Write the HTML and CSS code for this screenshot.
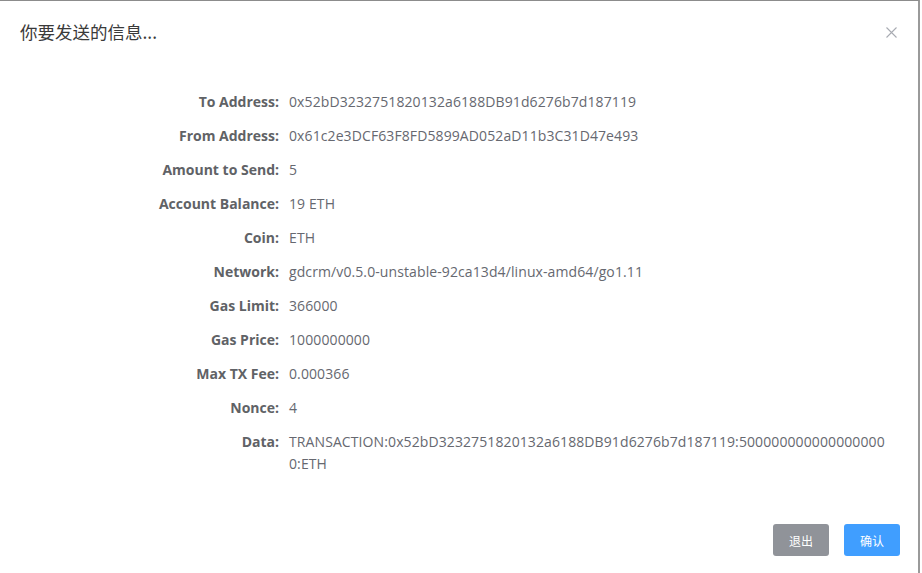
FILE: index.html
```html
<!DOCTYPE html>
<html lang="zh">
<head>
<meta charset="utf-8">
<link rel="stylesheet" href="styles.css">
</head>
<body>
<div class="dialog">
  <div class="header">
    <span class="title">你要发送的信息...</span>
    <button class="close" aria-label="close">
      <svg width="11" height="11" viewBox="0 0 11 11"><path d="M0.5 0.5 L10.5 10.5 M10.5 0.5 L0.5 10.5" stroke="#a8abb2" stroke-width="1.1" fill="none"/></svg>
    </button>
  </div>
  <div class="body">
    <div class="row"><div class="label">To Address:</div><div class="value">0x52bD3232751820132a6188DB91d6276b7d187119</div></div>
    <div class="row"><div class="label">From Address:</div><div class="value">0x61c2e3DCF63F8FD5899AD052aD11b3C31D47e493</div></div>
    <div class="row"><div class="label">Amount to Send:</div><div class="value">5</div></div>
    <div class="row"><div class="label">Account Balance:</div><div class="value">19 ETH</div></div>
    <div class="row"><div class="label">Coin:</div><div class="value">ETH</div></div>
    <div class="row"><div class="label">Network:</div><div class="value">gdcrm/v0.5.0-unstable-92ca13d4/linux-amd64/go1.11</div></div>
    <div class="row"><div class="label">Gas Limit:</div><div class="value">366000</div></div>
    <div class="row"><div class="label">Gas Price:</div><div class="value">1000000000</div></div>
    <div class="row"><div class="label">Max TX Fee:</div><div class="value">0.000366</div></div>
    <div class="row"><div class="label">Nonce:</div><div class="value">4</div></div>
    <div class="row"><div class="label">Data:</div><div class="value wrap">TRANSACTION:0x52bD3232751820132a6188DB91d6276b7d187119:5000000000000000000:ETH</div></div>
  </div>
  <div class="footer">
    <button class="btn btn-gray">退出</button>
    <button class="btn btn-blue">确认</button>
  </div>
</div>
</body>
</html>
```
FILE: styles.css
```css
html, body {
  margin: 0;
  padding: 0;
  background: #ffffff;
}
body {
  font-family: "Open Sans", "Noto Sans CJK SC", sans-serif;
  color: #606266;
}
.dialog {
  width: 918px;
  height: 572px;
  background: #ffffff;
  border-top: 1px solid #8c8c8c;
  border-right: 2px solid #9a9a9a;
  display: flex;
  flex-direction: column;
}
.header {
  height: 60px;
  padding: 2px 20px 0 20px;
  display: flex;
  align-items: center;
  justify-content: space-between;
  box-sizing: border-box;
}
.title {
  font-family: "Noto Sans CJK SC", sans-serif;
  font-size: 17.5px;
  color: #3a3a3a;
  line-height: 24px;
}
.close {
  border: 0;
  background: none;
  padding: 0;
  margin-right: 1px;
  display: flex;
}
.body {
  padding-top: 24px;
  padding-right: 31px;
}
.row {
  display: grid;
  grid-template-columns: 279px 1fr;
  column-gap: 10px;
  padding: 6px 0;
  font-size: 14px;
  line-height: 22px;
}
.label {
  text-align: right;
  font-weight: 700;
  color: #606266;
}
.value {
  color: #666870;
  letter-spacing: 0.1px;
}
.wrap {
  word-break: break-all;
}
.footer {
  display: flex;
  justify-content: flex-end;
  gap: 15px;
  margin-top: auto;
  padding: 0 18px 17px 0;
}
.btn {
  width: 56px;
  height: 32px;
  border: 0;
  border-radius: 3px;
  color: #ffffff;
  font-family: "Noto Sans CJK SC", sans-serif;
  font-size: 12px;
  padding: 0;
}
.btn-gray {
  background: #909399;
}
.btn-blue {
  background: #409eff;
}
```
